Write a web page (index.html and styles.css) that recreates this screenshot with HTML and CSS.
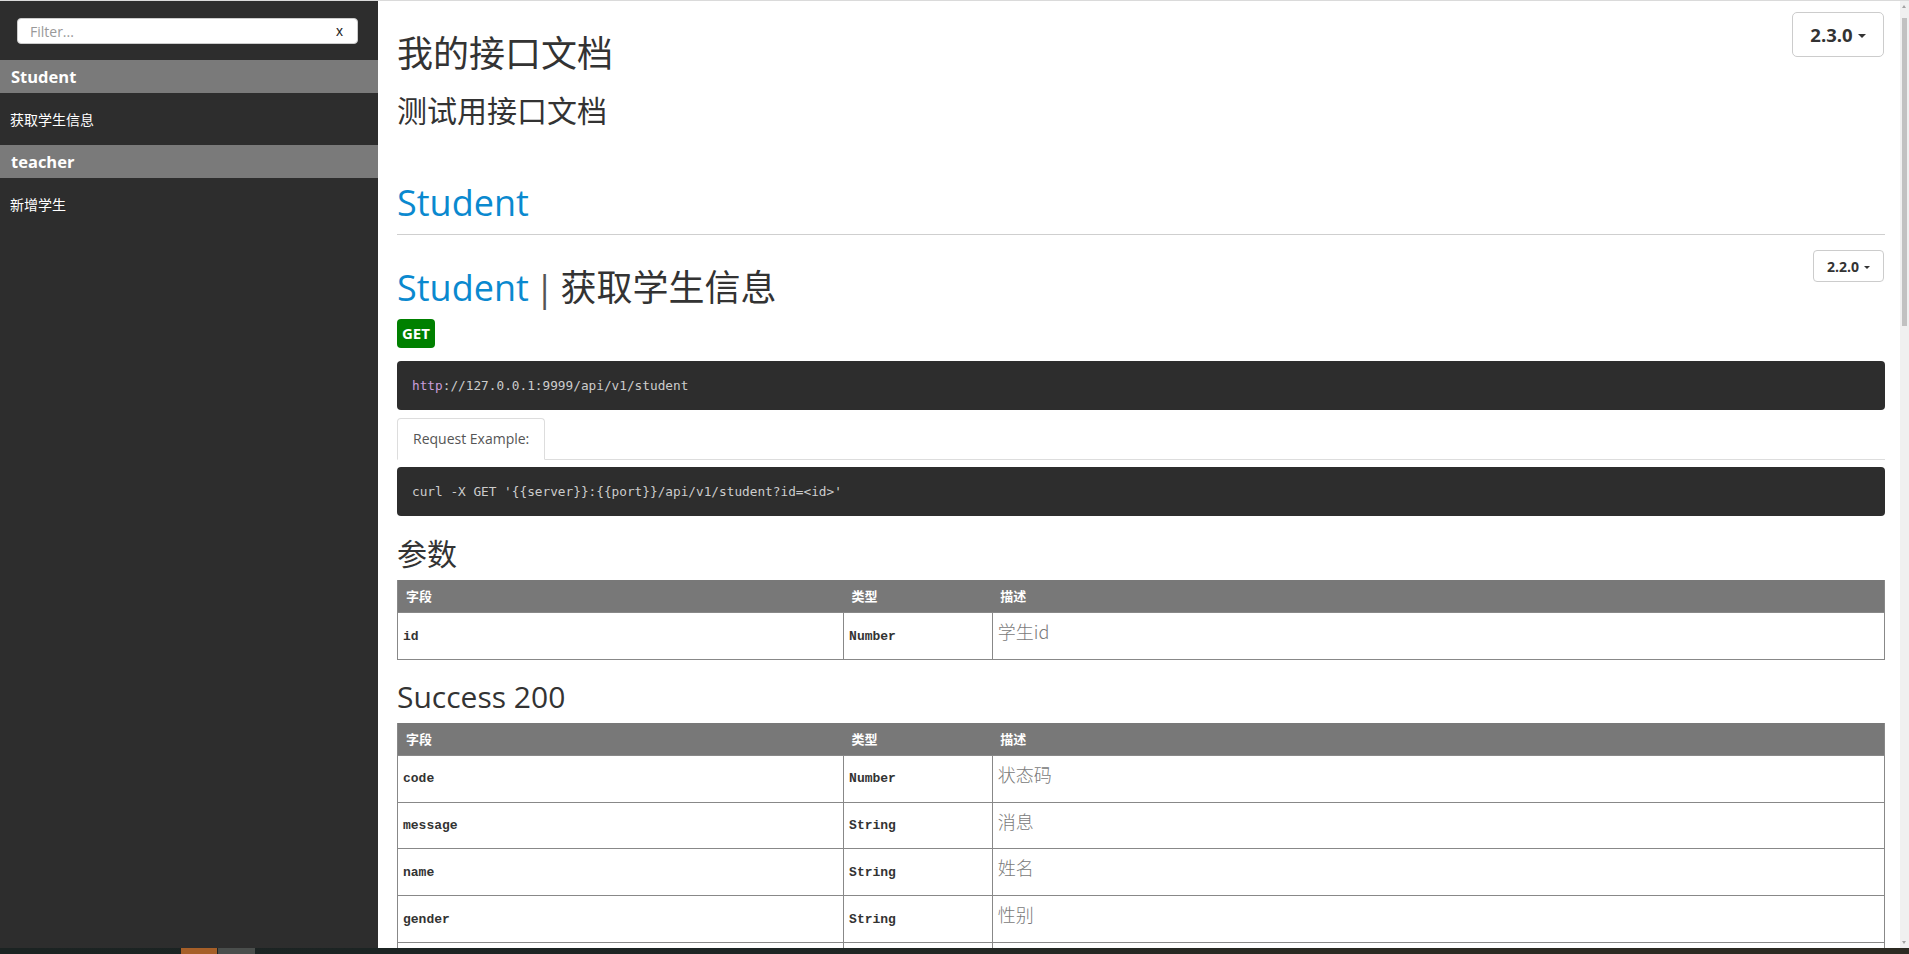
FILE: index.html
```html
<!DOCTYPE html>
<html lang="zh">
<head>
<meta charset="utf-8">
<title>我的接口文档</title>
<link rel="stylesheet" href="styles.css">
</head>
<body>
<div class="topline"></div>
<div class="app">
  <nav class="sidebar">
    <div class="filter-wrap">
      <div class="filter-box">
        <input class="filter-input" type="text" placeholder="Filter...">
        <span class="filter-clear">x</span>
      </div>
    </div>
    <div class="nav-header">Student</div>
    <div class="nav-item">获取学生信息</div>
    <div class="nav-header">teacher</div>
    <div class="nav-item">新增学生</div>
  </nav>

  <main class="main">
    <div class="page-top">
      <div class="page-titles">
        <h1 class="title">我的接口文档</h1>
        <h2 class="subtitle">测试用接口文档</h2>
      </div>
      <button class="version-btn version-lg">2.3.0 <span class="caret"></span></button>
    </div>

    <h1 class="section-title">Student</h1>

    <article class="api">
      <div class="api-head">
        <h1 class="api-title"><span class="api-group">Student</span><span class="api-sep">|</span>获取学生信息</h1>
        <button class="version-btn version-sm">2.2.0 <span class="caret caret-sm"></span></button>
      </div>
      <span class="badge-get">GET</span>
      <pre class="code-block"><span class="tok-proto">http</span>://127.0.0.1:9999/api/v1/student</pre>
      <ul class="tabs">
        <li class="tab active">Request Example:</li>
      </ul>
      <pre class="code-block code-curl">curl -X GET '{{server}}:{{port}}/api/v1/student?id=&lt;id&gt;'</pre>

      <h2 class="sub-head">参数</h2>
      <table class="fields">
        <thead>
          <tr><th class="c-field">字段</th><th class="c-type">类型</th><th class="c-desc">描述</th></tr>
        </thead>
        <tbody>
          <tr><td class="code">id</td><td class="code">Number</td><td><p>学生id</p></td></tr>
        </tbody>
      </table>

      <h2 class="sub-head">Success 200</h2>
      <table class="fields">
        <thead>
          <tr><th class="c-field">字段</th><th class="c-type">类型</th><th class="c-desc">描述</th></tr>
        </thead>
        <tbody>
          <tr><td class="code">code</td><td class="code">Number</td><td><p>状态码</p></td></tr>
          <tr><td class="code">message</td><td class="code">String</td><td><p>消息</p></td></tr>
          <tr><td class="code">name</td><td class="code">String</td><td><p>姓名</p></td></tr>
          <tr><td class="code">gender</td><td class="code">String</td><td><p>性别</p></td></tr>
          <tr class="row-empty"><td></td><td></td><td></td></tr>
        </tbody>
      </table>
    </article>
  </main>

  <div class="scrollbar">
    <div class="sb-arrow sb-up"></div>
    <div class="sb-thumb"></div>
    <div class="sb-track"></div>
    <div class="sb-arrow sb-down"></div>
  </div>
</div>
<div class="taskbar">
  <span class="tb-space"></span>
  <span class="tb-orange"></span>
  <span class="tb-gray"></span>
  <span class="tb-rest"></span>
</div>
</body>
</html>
```
FILE: styles.css
```css
* { box-sizing: border-box; }
html, body { margin: 0; padding: 0; }
body {
  width: 1909px;
  height: 954px;
  overflow: hidden;
  display: flex;
  flex-direction: column;
  font-family: "Open Sans", "Noto Sans CJK SC", sans-serif;
  color: #333;
  background: #fff;
}
.topline { height: 1px; background: #dadada; flex: none; }
.app { flex: 1; display: flex; min-height: 0; }

/* Sidebar */
.sidebar {
  width: 378px;
  flex: none;
  background: #2d2d2d;
  color: #fff;
}
.filter-wrap { padding: 17px 20px 16px 17px; }
.filter-box {
  height: 26px;
  background: #fff;
  border: 1px solid #ccc;
  border-radius: 4px;
  display: flex;
  align-items: center;
  padding: 0 14px 0 12px;
}
.filter-input {
  flex: 1;
  border: none;
  outline: none;
  background: transparent;
  font-family: "Open Sans", "Noto Sans CJK SC", sans-serif;
  font-size: 14px;
  color: #333;
  padding: 0;
  min-width: 0;
}
.filter-input::placeholder { color: #999; }
.filter-clear { font-size: 14px; color: #222; font-family: "Liberation Sans", sans-serif; }
.nav-header {
  height: 33px;
  line-height: 33px;
  background: #7a7a7a;
  padding-left: 11px;
  font-size: 16.5px;
  font-weight: 700;
  color: #fff;
}
.nav-item {
  height: 52px;
  display: flex;
  align-items: center;
  padding-left: 10px;
  font-size: 14px;
  color: #fff;
  font-family: "Noto Sans CJK SC", sans-serif;
}

/* Main */
.main {
  flex: 1;
  min-width: 0;
  padding: 0 15px 0 19px;
  overflow: hidden;
  background: #fff;
}
.page-top { display: flex; justify-content: space-between; align-items: flex-start; }
.title {
  margin: 33px 0 0;
  font-size: 36px;
  line-height: 40px;
  font-weight: 400;
  color: #333;
}
.subtitle {
  margin: 20px 0 0;
  font-size: 30px;
  line-height: 33px;
  font-weight: 400;
  color: #333;
}
.version-btn {
  background: #fff;
  border: 1px solid #ccc;
  border-radius: 5px;
  color: #333;
  font-family: "Open Sans", sans-serif;
  font-weight: 700;
  display: flex;
  align-items: center;
  justify-content: center;
  gap: 5px;
  padding: 0;
  margin-right: 1px;
}
.version-lg { margin-top: 11px; width: 92px; height: 45px; font-size: 18.5px; }
.version-sm { margin-top: 15px; width: 71px; height: 32px; font-size: 14px; border-radius: 4px; }
.caret {
  width: 0; height: 0;
  border-left: 4px solid transparent;
  border-right: 4px solid transparent;
  border-top: 4px solid #333;
  margin-top: 2px;
}
.caret-sm { border-left-width: 3.5px; border-right-width: 3.5px; border-top-width: 3.5px; }

.section-title {
  margin: 56px 0 0;
  font-size: 36px;
  line-height: 40px;
  font-weight: 400;
  color: #0a89cf;
  padding-bottom: 11px;
  border-bottom: 1px solid #cfcfcf;
}

.api-head { display: flex; justify-content: space-between; align-items: flex-start; }
.api-title {
  margin: 33px 0 0;
  font-size: 36px;
  line-height: 40px;
  font-weight: 400;
  color: #333;
}
.api-group { color: #0a89cf; }
.api-sep { color: #555; margin: 0 6px 0 6px; }

.badge-get {
  display: inline-block;
  margin-top: 11px;
  background: #008000;
  color: #fff;
  font-weight: 700;
  font-size: 15px;
  line-height: 21px;
  padding: 4px 5px;
  border-radius: 4px;
  vertical-align: top;
}
.code-block {
  margin: 13px 0 0;
  background: #2d2d2d;
  color: #ccc;
  border-radius: 4px;
  padding: 15px;
  font-family: "DejaVu Sans Mono", monospace;
  font-size: 12.75px;
  line-height: 19px;
  white-space: pre;
}
.tok-proto { color: #c99ddb; }
.tabs {
  list-style: none;
  margin: 8px 0 0;
  padding: 0;
  display: flex;
  border-bottom: 1px solid #ddd;
}
.tab {
  margin-bottom: -1px;
  border: 1px solid #ddd;
  border-bottom-color: transparent;
  border-radius: 4px 4px 0 0;
  background: #fff;
  padding: 10px 15px;
  font-size: 14px;
  line-height: 20px;
  color: #555;
}
.code-curl { margin-top: 7px; }

.sub-head {
  margin: 21px 0 0;
  font-size: 30px;
  line-height: 33px;
  font-weight: 400;
  color: #333;
}
.fields {
  width: 100%;
  margin-top: 10px;
  border-collapse: collapse;
  border: 1px solid #888;
  border-top: none;
  table-layout: fixed;
}
.fields + .sub-head { margin-top: 20px; }
.fields th {
  background: #787878;
  color: #fff;
  text-align: left;
  font-size: 13px;
  font-weight: 700;
  line-height: 16px;
  padding: 8px 8px;
  font-family: "Noto Sans CJK SC", sans-serif;
}
.c-field { width: 30%; }
.c-type { width: 10%; }
.c-desc { width: 60%; }
.fields td {
  border-top: 1px solid #888;
  border-left: 1px solid #888;
  padding: 8px 5px 7.75px 5px;
  vertical-align: middle;
}
.fields td:first-child { border-left: none; }
.fields td.code {
  font-family: "Liberation Mono", monospace;
  font-weight: 700;
  font-size: 13px;
  color: #333;
}
.fields td p {
  margin: 0 0 10px;
  font-size: 18px;
  line-height: 20px;
  color: #7a7a7a;
  font-family: "Noto Sans CJK SC", sans-serif;
  font-weight: 300;
}
.row-empty td { height: 46px; }

/* Scrollbar */
.scrollbar {
  width: 9px;
  flex: none;
  background: #f0f0f0;
  display: flex;
  flex-direction: column;
  align-items: center;
}
.sb-arrow { height: 16px; width: 9px; position: relative; flex: none; }
.sb-up::after {
  content: "";
  position: absolute;
  left: 2px; top: 4px;
  border-left: 2.5px solid transparent;
  border-right: 2.5px solid transparent;
  border-bottom: 3px solid #a3a3a3;
}
.sb-down::after {
  content: "";
  position: absolute;
  left: 2px; bottom: 4px;
  border-left: 2.5px solid transparent;
  border-right: 2.5px solid transparent;
  border-top: 3px solid #a3a3a3;
}
.sb-thumb { width: 5px; height: 308px; background: #c1c1c1; flex: none; margin-top: 1px; }
.sb-track { flex: 1; }

/* Taskbar strip */
.taskbar {
  height: 6px;
  flex: none;
  display: flex;
  background: linear-gradient(90deg, #1b2322 0%, #1d2524 40%, #2a2a22 70%, #2c2a22 100%);
}
.tb-space { width: 181px; }
.tb-orange { width: 36px; background: #a65f28; }
.tb-gray { width: 37px; margin-left: 1px; background: #4a4e4c; }
.tb-rest { flex: 1; }
```
